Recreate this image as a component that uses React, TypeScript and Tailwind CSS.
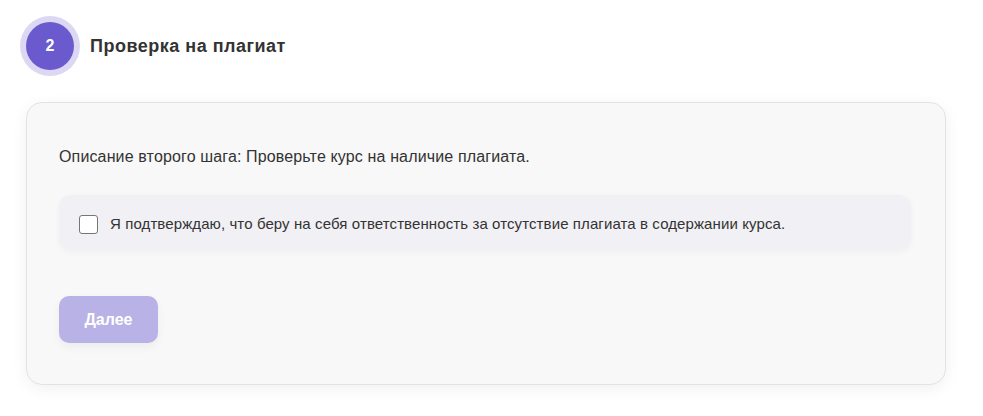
export default function App() {
  return (
    <div className="min-h-[416px] bg-white font-['Liberation_Sans',Arial,sans-serif] text-[#333]">
      <div className="flex items-center gap-[10px] pl-[20px] pt-[16px]">
        <div className="flex h-[60px] w-[60px] items-center justify-center rounded-full bg-[#dcd8f3]">
          <div className="flex h-[48px] w-[48px] items-center justify-center rounded-full bg-[#6a5acd] text-[16px] font-bold text-white">
            2
          </div>
        </div>
        <h2 className="text-[18px] font-bold tracking-[0.5px] text-[#333]">
          Проверка на плагиат
        </h2>
      </div>

      <div className="ml-[26px] mt-[26px] w-[920px] rounded-[16px] border border-[#e3e3e3] bg-[#f8f8f8] px-[32px] pb-[41px] pt-[42px] shadow-[0_4px_16px_rgba(0,0,0,0.06)]">
        <p className="text-[16px] leading-[24px] tracking-[0.14px] text-[#333]">
          Описание второго шага: Проверьте курс на наличие плагиата.
        </p>

        <label className="mt-[26px] mr-[2px] flex h-[55px] items-center gap-[12px] rounded-[12px] bg-[#f1f0f5] px-[20px] pt-[3px] shadow-[0_2px_6px_rgba(0,0,0,0.04)]">
          <input
            type="checkbox"
            className="h-[19px] w-[19px] appearance-none rounded-[3px] border border-[#767676] bg-white"
          />
          <span className="text-[15px] tracking-[0.1px] text-[#333]">
            Я подтверждаю, что беру на себя ответственность за отсутствие плагиата в содержании курса.
          </span>
        </label>

        <button
          disabled
          className="mt-[46px] h-[47px] w-[99px] rounded-[10px] bg-[#b8b2e6] text-[16px] font-bold text-white shadow-[0_4px_10px_rgba(0,0,0,0.05)]"
        >
          Далее
        </button>
      </div>
    </div>
  );
}
